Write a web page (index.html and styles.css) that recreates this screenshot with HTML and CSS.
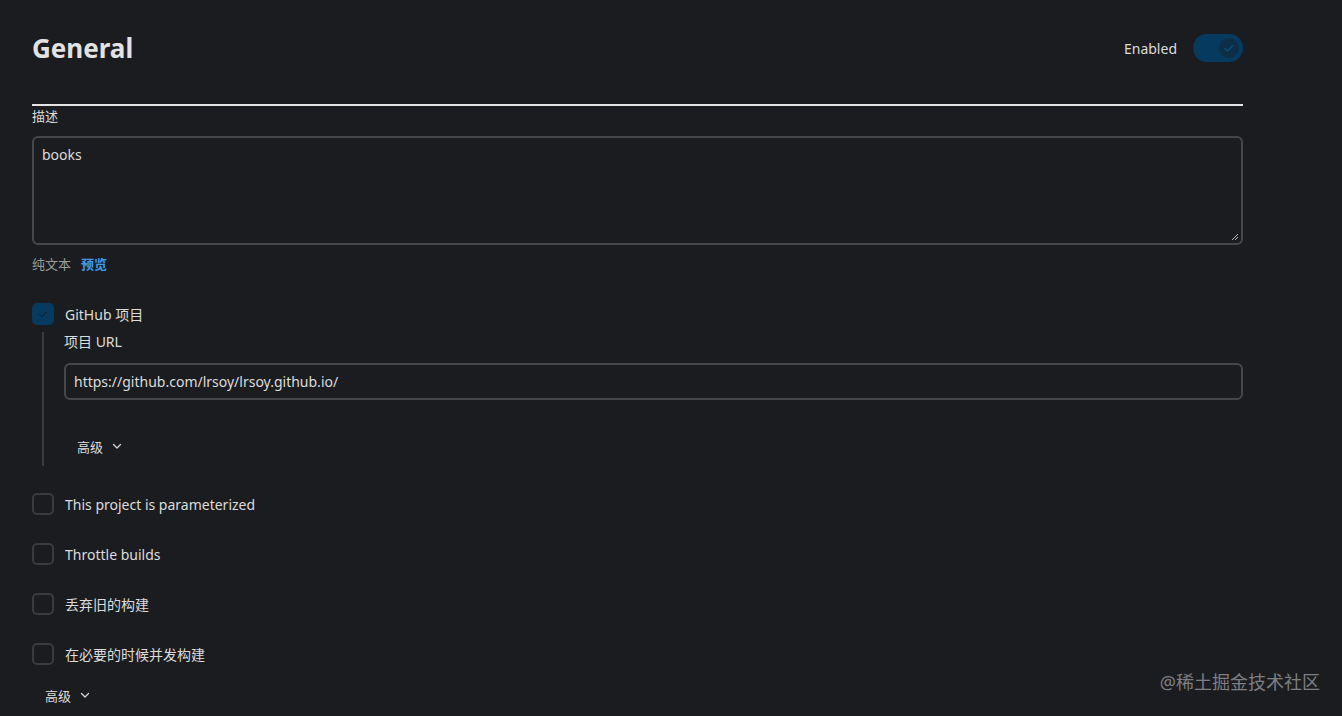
FILE: index.html
```html
<!DOCTYPE html>
<html lang="zh">
<head>
<meta charset="utf-8">
<link rel="stylesheet" href="styles.css">
</head>
<body>
<div class="page">
  <div class="header">
    <h1 class="title">General</h1>
    <div class="enabled">
      <span class="enabled-label">Enabled</span>
      <span class="toggle"><span class="knob"><svg width="14" height="14" viewBox="0 0 14 14"><path d="M3 7.5l2.5 2.5L11 4.5" fill="none" stroke="#0b4a73" stroke-width="1.6" stroke-linecap="round" stroke-linejoin="round"/></svg></span></span>
    </div>
  </div>
  <div class="rule"></div>
  <div class="label">描述</div>
  <div class="textarea">books<span class="grip"><svg width="8" height="8" viewBox="0 0 8 8"><path d="M7 1L1 7M7 4L4 7" stroke="#bbb" stroke-width="1"/></svg></span></div>
  <div class="format"><span class="plain">纯文本</span><span class="preview">预览</span></div>

  <div class="option checked-option">
    <span class="box checked"><svg width="14" height="14" viewBox="0 0 14 14"><path d="M3.5 7.5l2.3 2.3L10.5 5" fill="none" stroke="#0b2a42" stroke-width="1.6" stroke-linecap="round" stroke-linejoin="round"/></svg></span>
    <span class="opt-text">GitHub 项目</span>
  </div>
  <div class="nested">
    <div class="label nested-label">项目 URL</div>
    <div class="input">https://github.com/lrsoy/lrsoy.github.io/</div>
    <div class="advanced nested-adv">高级 <svg width="12" height="12" viewBox="0 0 12 12"><path d="M2.5 4.5L6 8l3.5-3.5" fill="none" stroke="#d6d6d6" stroke-width="1.3" stroke-linecap="round" stroke-linejoin="round"/></svg></div>
  </div>

  <div class="option"><span class="box"></span><span class="opt-text">This project is parameterized</span></div>
  <div class="option"><span class="box"></span><span class="opt-text">Throttle builds</span></div>
  <div class="option"><span class="box"></span><span class="opt-text">丢弃旧的构建</span></div>
  <div class="option"><span class="box"></span><span class="opt-text">在必要的时候并发构建</span></div>
  <div class="advanced bottom-adv">高级 <svg width="12" height="12" viewBox="0 0 12 12"><path d="M2.5 4.5L6 8l3.5-3.5" fill="none" stroke="#d6d6d6" stroke-width="1.3" stroke-linecap="round" stroke-linejoin="round"/></svg></div>
</div>
<div class="watermark">@稀土掘金技术社区</div>
</body>
</html>
```
FILE: styles.css
```css
html, body {
  margin: 0;
  padding: 0;
  background: #1b1c1f;
  height: 100%;
  overflow: hidden;
}
body {
  font-family: "Noto Sans", "Noto Sans CJK SC", sans-serif;
  color: #dcdcdc;
  font-size: 14px;
  position: relative;
}
.page {
  width: 1211px;
  margin-left: 32px;
  padding-top: 28px;
}
.header {
  display: flex;
  justify-content: space-between;
  align-items: center;
  height: 40px;
}
.title {
  margin: 0;
  font-size: 26px;
  font-weight: 700;
  color: #e2e2e2;
  line-height: 40px;
}
.enabled {
  display: flex;
  align-items: center;
  gap: 16px;
}
.enabled-label {
  font-size: 14px;
  color: #dcdcdc;
}
.toggle {
  width: 50px;
  height: 28px;
  border-radius: 14px;
  background: #063b5f;
  display: flex;
  align-items: center;
  justify-content: flex-end;
  padding-right: 4px;
  box-sizing: border-box;
}
.knob {
  width: 20px;
  height: 20px;
  border-radius: 50%;
  background: #0d2e47;
  display: flex;
  align-items: center;
  justify-content: center;
}
.rule {
  margin-top: 36px;
  height: 2px;
  background: #e4e4e4;
}
.label {
  font-size: 13px;
  line-height: 20px;
  margin-top: 0;
  color: #dcdcdc;
}
.textarea {
  position: relative;
  margin-top: 10px;
  height: 109px;
  border: 2px solid #46474b;
  border-radius: 6px;
  box-sizing: border-box;
  padding: 7px 8px;
  line-height: 20px;
  color: #dcdcdc;
}
.grip {
  position: absolute;
  right: 2px;
  bottom: 2px;
  line-height: 0;
}
.format {
  margin-top: 9px;
  font-size: 13px;
  line-height: 20px;
  display: flex;
  gap: 10px;
}
.plain { color: #9a9a9a; }
.preview { color: #3b9cf0; font-weight: 700; }

.option {
  display: flex;
  align-items: center;
  gap: 11px;
  height: 24px;
  margin-top: 26px;
}
.checked-option { margin-top: 28px; }
.box {
  width: 22px;
  height: 22px;
  box-sizing: border-box;
  border: 2px solid #3a3b3f;
  border-radius: 5px;
  display: flex;
  align-items: center;
  justify-content: center;
}
.box.checked {
  background: #063b5f;
  border-color: #063b5f;
}
.opt-text {
  font-size: 14px;
  color: #dcdcdc;
}
.nested {
  margin-left: 10px;
  border-left: 2px solid #3a3b3f;
  padding-left: 20px;
  margin-top: 6px;
  padding-bottom: 6px;
}
.nested-label {
  margin-top: 0;
  padding-top: 0;
  font-size: 14px;
}
.input {
  margin-top: 11px;
  height: 37px;
  border: 2px solid #46474b;
  border-radius: 6px;
  box-sizing: border-box;
  padding: 0 8px;
  display: flex;
  align-items: center;
  color: #dcdcdc;
}
.advanced {
  display: inline-flex;
  align-items: center;
  gap: 8px;
  font-size: 13px;
  color: #dcdcdc;
  height: 28px;
}
.nested-adv {
  margin-top: 32px;
  margin-left: 13px;
}
.bottom-adv {
  margin-top: 15px;
  margin-left: 13px;
}
.watermark {
  position: absolute;
  right: 22px;
  bottom: 22px;
  font-size: 18px;
  color: #7e7f82;
}
```
